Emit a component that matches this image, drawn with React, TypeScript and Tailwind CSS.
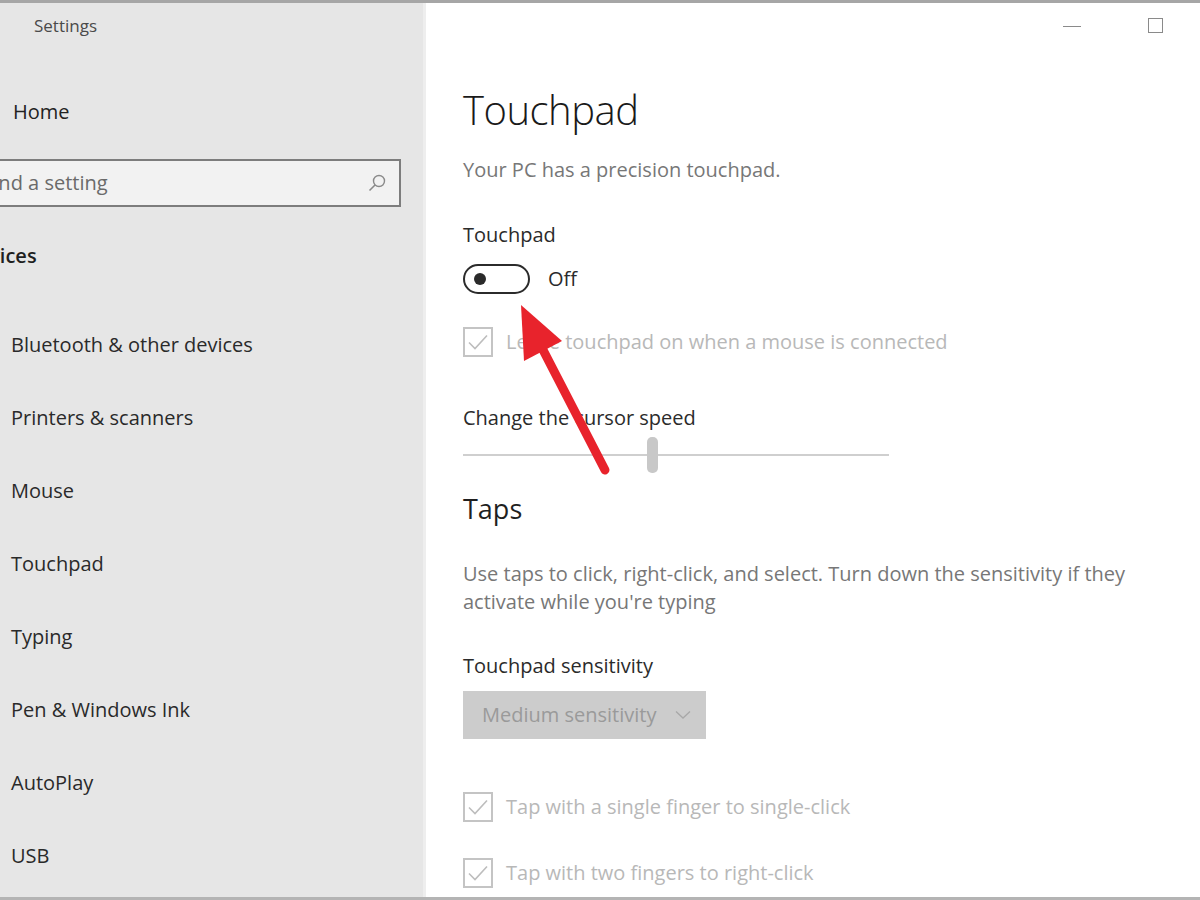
import React from "react";

const font = { fontFamily: '"Open Sans", "Noto Sans", "Liberation Sans", sans-serif' };

function Check() {
  return (
    <div className="w-[30px] h-[30px] border-2 border-[#c4c4c4] flex items-center justify-center shrink-0">
      <svg width="22" height="18" viewBox="0 0 22 18" fill="none">
        <path d="M2 9.5 L8 15.5 L20 2.5" stroke="#bdbdbd" strokeWidth="1.6" />
      </svg>
    </div>
  );
}

export default function App() {
  const nav = [
    "Bluetooth & other devices",
    "Printers & scanners",
    "Mouse",
    "Touchpad",
    "Typing",
    "Pen & Windows Ink",
    "AutoPlay",
    "USB",
  ];
  return (
    <div className="relative w-[1200px] h-[900px] overflow-hidden bg-white" style={font}>
      <div className="flex w-full h-full border-t-[3px] border-t-[#a6a6a6] border-b-[3px] border-b-[#b4b4b4]">
        {/* Sidebar */}
        <div className="w-[426px] shrink-0 h-full bg-[#e6e6e6] border-r-[3px] border-r-[#eeeeee] overflow-hidden flex flex-col">
          <div className="mt-[11px] h-[24px] leading-[24px] pl-[34px] text-[17px] text-[#4a4a4a]">Settings</div>
          <div className="mt-[60px] h-[28px] leading-[28px] pl-[13px] text-[20px] text-[#222]">Home</div>
          <div className="mt-[33px] ml-[-26px] w-[427px] h-[48px] border-2 border-[#7d7d7d] bg-[#f2f2f2] flex items-center justify-between pl-[7px] pr-[12px] shrink-0">
            <span className="text-[20px] text-[#6a6a6a] whitespace-nowrap">Find a setting</span>
            <svg width="20" height="20" viewBox="0 0 20 20" fill="none">
              <circle cx="12" cy="8" r="5.5" stroke="#8a8a8a" strokeWidth="1.4" />
              <path d="M8 12 L2.5 17.5" stroke="#8a8a8a" strokeWidth="1.6" />
            </svg>
          </div>
          <div className="mt-[35px] h-[28px] leading-[28px] ml-[-37px] text-[20px] font-semibold text-[#1f1f1f] whitespace-nowrap">Devices</div>
          <div className="mt-[38px] flex flex-col">
            {nav.map((n) => (
              <div key={n} className="h-[73px] flex items-center pl-[11px] text-[20px] text-[#2a2a2a] whitespace-nowrap">
                {n}
              </div>
            ))}
          </div>
        </div>

        {/* Main */}
        <div className="flex-1 h-full flex flex-col">
          <div className="h-[45px] flex items-start justify-end shrink-0">
            <div className="w-[18px] h-[1px] bg-[#8a8a8a] mt-[23px] mr-[67px]"></div>
            <div className="w-[15px] h-[15px] border border-[#8a8a8a] mt-[15px] mr-[37px]"></div>
          </div>
          <div className="pl-[37px] flex flex-col">
            <div className="mt-[38px] h-[48px] leading-[48px] text-[40px] font-light text-[#1a1a1a] tracking-[-0.5px]">Touchpad</div>
            <div className="mt-[22px] h-[28px] leading-[28px] text-[20px] text-[#777]">Your PC has a precision touchpad.</div>
            <div className="mt-[37px] h-[28px] leading-[28px] text-[20px] text-[#2b2b2b]">Touchpad</div>
            <div className="mt-[15px] h-[30px] flex items-center">
              <div className="w-[67px] h-[30px] rounded-full border-2 border-[#2b2b2b] flex items-center pl-[9px]">
                <div className="w-[12px] h-[12px] rounded-full bg-[#2b2b2b]"></div>
              </div>
              <span className="ml-[18px] text-[20px] text-[#2b2b2b]">Off</span>
            </div>
            <div className="mt-[33px] h-[30px] flex items-center">
              <Check />
              <span className="ml-[13px] text-[20px] text-[#b8b8b8] whitespace-nowrap">Leave touchpad on when a mouse is connected</span>
            </div>
            <div className="mt-[47px] h-[28px] leading-[28px] text-[20px] text-[#2b2b2b]">Change the cursor speed</div>
            <div className="mt-[5px] w-[426px] h-[36px] relative flex items-center">
              <div className="w-full h-[2px] bg-[#cfcfcf]"></div>
              <div className="absolute left-[184px] top-0 w-[11px] h-[36px] rounded-[5px] bg-[#c8c8c8]"></div>
            </div>
            <div className="mt-[16px] h-[40px] leading-[40px] text-[27px] text-[#1f1f1f]">Taps</div>
            <div className="mt-[31px] w-[690px] leading-[28px] text-[20px] text-[#777]">
              Use taps to click, right-click, and select. Turn down the sensitivity if they activate while you're typing
            </div>
            <div className="mt-[36px] h-[28px] leading-[28px] text-[20px] text-[#2b2b2b]">Touchpad sensitivity</div>
            <div className="mt-[11px] w-[243px] h-[48px] bg-[#cccccc] flex items-center justify-between pl-[19px] pr-[15px]">
              <span className="text-[20px] text-[#9a9a9a] whitespace-nowrap">Medium sensitivity</span>
              <svg width="16" height="10" viewBox="0 0 16 10" fill="none">
                <path d="M1 1.5 L8 8 L15 1.5" stroke="#a8a8a8" strokeWidth="1.3" />
              </svg>
            </div>
            <div className="mt-[53px] h-[30px] flex items-center">
              <Check />
              <span className="ml-[13px] text-[20px] text-[#b8b8b8] whitespace-nowrap">Tap with a single finger to single-click</span>
            </div>
            <div className="mt-[36px] h-[30px] flex items-center">
              <Check />
              <span className="ml-[13px] text-[20px] text-[#b8b8b8] whitespace-nowrap">Tap with two fingers to right-click</span>
            </div>
          </div>
        </div>
      </div>

      {/* Red arrow annotation */}
      <svg className="absolute left-0 top-0 pointer-events-none" width="1200" height="900" viewBox="0 0 1200 900">
        <path d="M605 470 L541 346" stroke="#e8232c" strokeWidth="9" strokeLinecap="round" />
        <polygon points="521,305 524,361 562,341" fill="#e8232c" />
      </svg>
    </div>
  );
}
